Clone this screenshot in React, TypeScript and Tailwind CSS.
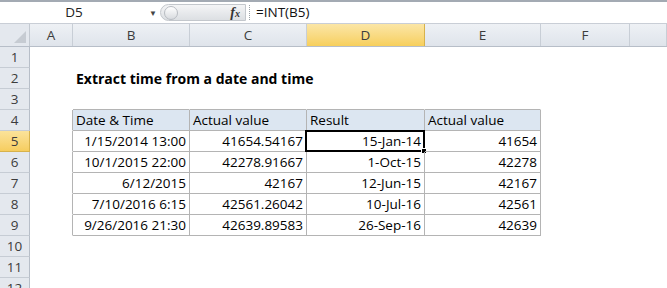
import React from 'react';

const cols = [
    { key: 'A', w: 'w-[43px]' },
    { key: 'B', w: 'w-[117px]' },
    { key: 'C', w: 'w-[117px]' },
    { key: 'D', w: 'w-[118px]' },
    { key: 'E', w: 'w-[116px]' },
    { key: 'F', w: 'w-[89px]' },
    { key: 'G', w: 'flex-1' },
];

// cell contents keyed by row, columns B..E
const table: Record<number, string[]> = {
    4: ['Date & Time', 'Actual value', 'Result', 'Actual value'],
    5: ['1/15/2014 13:00', '41654.54167', '15-Jan-14', '41654'],
    6: ['10/1/2015 22:00', '42278.91667', '1-Oct-15', '42278'],
    7: ['6/12/2015', '42167', '12-Jun-15', '42167'],
    8: ['7/10/2016 6:15', '42561.26042', '10-Jul-16', '42561'],
    9: ['9/26/2016 21:30', '42639.89583', '26-Sep-16', '42639'],
};

const rows = Array.from({ length: 12 }, (_, i) => i + 1);

const inTable = (r: number, c: number) => r >= 4 && r <= 9 && c >= 1 && c <= 4;

const FormulaBar: React.FC = () => (
    <div className="h-[24px] flex border-t-2 border-[#a3aab3] bg-white border-b border-b-[#c9ced6]">
        <div className="w-[148px] flex items-center justify-center text-[13.5px] text-[#222]">D5</div>
        <div className="w-[10px] flex items-center justify-center text-[8px] text-[#444]">▼</div>
        <div className="w-[86px] ml-[2px] my-[2px] flex items-center rounded-l-full border border-[#c3c7cc] bg-gradient-to-b from-[#f4f5f6] to-[#dcdfe3] pl-[3px] pr-[5px]">
            <div className="w-[14px] h-[14px] rounded-full border border-[#b8bcc2] bg-gradient-to-b from-white to-[#d8dbdf]" />
            <div className="flex-1" />
            <span className="font-['Liberation_Serif',serif] italic font-bold text-[14px] text-[#333] leading-none">
                f<span className="text-[10px]">x</span>
            </span>
        </div>
        <div className="w-[1px] my-[3px] ml-[3px] border-l border-dotted border-[#9aa0a6]" />
        <div className="flex-1 flex items-center pl-[6px] text-[13.5px] text-[#111]">=INT(B5)</div>
    </div>
);

const App: React.FC = () => {
    return (
        <div className="w-[667px] h-[288px] overflow-hidden bg-white font-['Open_Sans',sans-serif] text-[13.5px] text-black">
            <FormulaBar />
            {/* column headers */}
            <div className="h-[23px] flex bg-[#e4e8ee] border-b border-[#b7bec8]">
                <div className="w-[30px] relative border-r border-[#c3c9d1]">
                    <div className="absolute right-[3px] bottom-[3px] w-0 h-0 border-l-[12px] border-l-transparent border-b-[12px] border-b-[#c6cbd2]" />
                </div>
                {cols.map((c) => (
                    <div
                        key={c.key}
                        className={`${c.w} flex items-center justify-center text-[#3c3c3c] border-r ${
                            c.key === 'D'
                                ? 'bg-gradient-to-b from-[#fbe6a6] to-[#f7cf5b] border-[#d7b24c]'
                                : 'bg-gradient-to-b from-[#eef1f5] to-[#dfe4eb] border-[#c8ced6]'
                        }`}
                    >
                        {c.key !== 'G' && c.key}
                    </div>
                ))}
            </div>
            {/* rows */}
            {rows.map((r) => (
                <div key={r} className="h-[21px] flex">
                    <div
                        className={`w-[30px] flex items-center justify-center border-b border-r text-[#3c3c3c] ${
                            r === 5
                                ? 'bg-gradient-to-b from-[#fbe39a] to-[#f6cd5e] border-b-[#d7b24c] border-r-[#d7b24c]'
                                : 'bg-[#e4e8ee] border-b-[#c6ccd4] border-r-[#b7bec8]'
                        }`}
                    >
                        {r}
                    </div>
                    {cols.map((c, ci) => {
                        const tbl = inTable(r, ci);
                        const text = tbl ? table[r][ci - 1] : '';
                        const right = inTable(r, ci) || inTable(r, ci + 1);
                        const bottom = inTable(r, ci) || inTable(r + 1, ci);
                        const isHead = r === 4 && tbl;
                        const isSel = r === 5 && c.key === 'D';
                        return (
                            <div
                                key={c.key}
                                className={`${c.w} relative flex items-center px-[3px] whitespace-nowrap ${
                                    right ? 'border-r border-r-[#b4b4b4]' : 'border-r border-r-transparent'
                                } ${bottom ? 'border-b border-b-[#b4b4b4]' : 'border-b border-b-transparent'} ${
                                    isHead ? 'bg-[#dce6f1] justify-start' : 'justify-end'
                                }`}
                            >
                                {r === 2 && c.key === 'B' ? (
                                    <span className="absolute left-[3px] font-bold text-[14px]">Extract time from a date and time</span>
                                ) : (
                                    text
                                )}
                                {isSel && (
                                    <div className="absolute left-[-2px] top-[-1px] right-[-1px] bottom-[-1px] border-2 border-black">
                                        <div className="absolute right-[-4px] bottom-[-4px] w-[6px] h-[6px] bg-black border border-white" />
                                    </div>
                                )}
                            </div>
                        );
                    })}
                </div>
            ))}
        </div>
    );
};

export default App;
